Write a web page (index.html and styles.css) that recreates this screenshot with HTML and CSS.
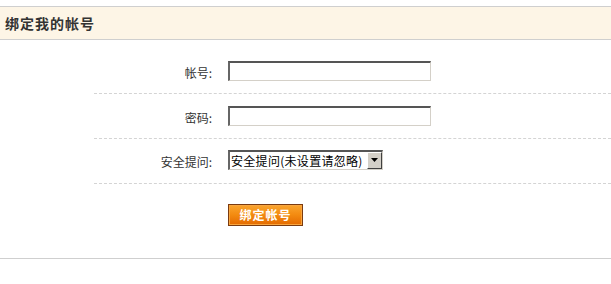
FILE: index.html
```html
<!DOCTYPE html>
<html lang="zh-CN">
<head>
<meta charset="utf-8">
<title>绑定我的帐号</title>
<link rel="stylesheet" href="styles.css">
</head>
<body>
<div class="page">
  <div class="hd">绑定我的帐号</div>
  <form class="form">
    <div class="row">
      <label class="label" for="u">帐号:</label>
      <input class="txt" id="u" type="text">
    </div>
    <div class="row">
      <label class="label" for="p">密码:</label>
      <input class="txt" id="p" type="password">
    </div>
    <div class="row row-sel">
      <label class="label" for="q">安全提问:</label>
      <span class="sel">
        <select id="q" class="sel-box">
          <option>安全提问(未设置请忽略)</option>
        </select>
        <span class="sel-btn"><svg width="7" height="4" viewBox="0 0 7 4"><path d="M0 0H7L3.5 4Z" fill="#000"/></svg></span>
      </span>
    </div>
    <div class="actions">
      <button type="button" class="btn">绑定帐号</button>
    </div>
  </form>
  <div class="foot"></div>
</div>
</body>
</html>
```

FILE: styles.css
```css
html, body {
  margin: 0;
  padding: 0;
  background: #fff;
}
body {
  font-family: "Noto Sans CJK SC", "DejaVu Sans", sans-serif;
  font-size: 12px;
  color: #333;
}
.page {
  padding-top: 6px;
}
.hd {
  height: 32px;
  box-sizing: content-box;
  border-top: 1px solid #cfcfcf;
  border-bottom: 1px solid #cfcfcf;
  background: #fdf5e6;
  display: flex;
  align-items: center;
  padding-left: 5px;
  font-size: 14px;
  font-weight: bold;
  color: #333;
  letter-spacing: 1px;
}
.form {
  margin: 0;
  padding: 9px 0 0 94px;
}
.row {
  display: flex;
  align-items: center;
  height: 44px;
  border-bottom: 1px dashed #d4d4d4;
}
.row-sel {
  padding-bottom: 3px;
  height: 41px;
}
.label {
  width: 134px;
  box-sizing: border-box;
  padding-right: 16px;
  text-align: right;
  color: #333;
  padding-top: 3px;
}
.txt {
  width: 203px;
  height: 20px;
  box-sizing: border-box;
  margin: 0;
  padding: 0 2px;
  border-top: 2px solid #555;
  border-left: 2px solid #666;
  border-right: 1px solid #d4d0c8;
  border-bottom: 1px solid #d4d0c8;
  background: #fff;
  font: inherit;
  outline: none;
}
.sel {
  display: inline-flex;
  align-items: stretch;
  width: 155px;
  height: 20px;
  box-sizing: border-box;
  border-top: 2px solid #555;
  border-left: 2px solid #666;
  border-right: 1px solid #d4d0c8;
  border-bottom: 1px solid #d4d0c8;
  background: #fff;
}
.sel-box {
  -webkit-appearance: none;
  appearance: none;
  flex: 1;
  min-width: 0;
  border: 0;
  margin: 0;
  padding: 0 0 0 1px;
  background: transparent;
  font-family: "Noto Sans CJK SC", sans-serif;
  font-size: 12px;
  letter-spacing: 0.3px;
  color: #000;
  outline: none;
  line-height: 17px;
  height: 17px;
}
.sel-btn {
  width: 15px;
  box-sizing: border-box;
  background: #d4d0c8;
  border-top: 1px solid #fff;
  border-left: 1px solid #fff;
  border-right: 1px solid #404040;
  border-bottom: 1px solid #404040;
  display: flex;
  align-items: center;
  justify-content: center;
}
.actions {
  padding: 20px 0 32px 134px;
}
.btn {
  display: block;
  width: 75px;
  height: 22px;
  margin: 0;
  padding: 0;
  box-sizing: border-box;
  border: 1px solid #7b3b10;
  box-shadow: inset 0 0 0 1px #f8a640;
  background: linear-gradient(#faa52e, #f38a10 50%, #e46a00);
  color: #fff;
  font-family: "Noto Sans CJK SC", sans-serif;
  font-size: 12px;
  font-weight: bold;
  letter-spacing: 1px;
  line-height: 20px;
  cursor: pointer;
}
.foot {
  border-top: 1px solid #cfcfcf;
}
```
